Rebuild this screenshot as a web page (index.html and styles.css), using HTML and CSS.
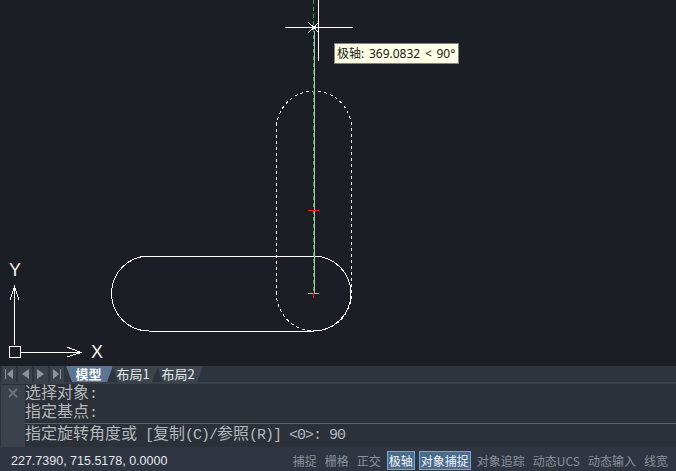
FILE: index.html
```html
<!DOCTYPE html>
<html lang="zh-CN">
<head>
<meta charset="utf-8">
<title>CAD</title>
<link rel="stylesheet" href="styles.css">
</head>
<body>
<div class="app">
  <div class="canvas">
    <svg class="drawing" width="676" height="366" viewBox="0 0 676 366">
      <path class="white" d="M313.5 256H149A37.5 37.5 0 0 0 149 331H313.5A37.5 37.5 0 0 0 313.5 256"/>
      <path class="dash" d="M276.5 293.5V128.5A37.5 37.5 0 0 1 351.5 128.5V293.5A37.5 37.5 0 0 1 276.5 293.5"/>
      <path class="grey" d="M314.5 31V293.5M308 293.5H319"/>
      <path class="green" d="M313.5 0V293"/>
      <path class="red" d="M308 210.5H319M313.5 293V298"/>
      <path class="white" d="M285 27.5H353M318.5 0V61M308 22L314 27.5L308 33M314 27.5L318 23V32Z"/>
      <path class="white" d="M14.5 345V288M10 300L14.5 287L19 300M21 352.5H80M67 347L81 352.5L67 357"/>
      <rect class="white" x="9.5" y="346.5" width="11" height="11"/>
      <text class="axis" x="9" y="276">Y</text>
      <text class="axis" x="91" y="358">X</text>
    </svg>
    <div class="tip">极轴: 369.0832 &lt; 90°</div>
  </div>
  <div class="tabbar">
    <div class="nav">
      <span class="navbtn"><svg width="12" height="12" viewBox="0 0 12 12"><path d="M2 1h1v10H2zM10 1v10L4 6z"/></svg></span>
      <span class="navbtn"><svg width="12" height="12" viewBox="0 0 12 12"><path d="M10 1v10L3 6z"/></svg></span>
      <span class="navbtn"><svg width="12" height="12" viewBox="0 0 12 12"><path d="M2 1v10l7-5z"/></svg></span>
      <span class="navbtn"><svg width="12" height="12" viewBox="0 0 12 12"><path d="M9 1h1v10H9zM2 1v10l6-5z"/></svg></span>
    </div>
    <span class="tab active">模型</span>
    <span class="tab">布局1</span>
    <span class="tab">布局2</span>
  </div>
  <div class="cmd">
    <div class="side"><svg width="10" height="10" viewBox="0 0 10 10"><path d="M1 1L9 9M9 1L1 9"/></svg></div>
    <div class="cmdbody">
      <div class="history">
        <div><span class="zh">选择对象</span>:</div>
        <div><span class="zh">指定基点</span>:</div>
      </div>
      <div class="prompt"><span class="zh">指定旋转角度或</span> [<span class="zh">复制</span>(C)/<span class="zh">参照</span>(R)] &lt;0&gt;: 90</div>
    </div>
  </div>
  <div class="status">
    <span class="coords">227.7390, 715.5178, 0.0000</span>
    <div class="toggles">
      <span class="tg">捕捉</span>
      <span class="tg">栅格</span>
      <span class="tg">正交</span>
      <span class="tg on">极轴</span>
      <span class="tg on">对象捕捉</span>
      <span class="tg">对象追踪</span>
      <span class="tg">动态UCS</span>
      <span class="tg">动态输入</span>
      <span class="tg">线宽</span>
    </div>
  </div>
</div>
</body>
</html>
```
FILE: styles.css
```css
* { box-sizing: border-box; }
html, body { margin: 0; padding: 0; background: #1b1f25; }
.app { width: 676px; height: 471px; display: flex; flex-direction: column; overflow: hidden; font-family: "Noto Sans CJK SC", "Liberation Sans", sans-serif; }
.canvas { position: relative; height: 366px; background: #1b1f25; }
.drawing { display: block; }
.drawing path, .drawing rect { fill: none; shape-rendering: crispEdges; }
.white { stroke: #fff; stroke-width: 1; }
.dash { stroke: #fff; stroke-width: 1; stroke-dasharray: 3 3; }
.grey { stroke: #b9bdb9; stroke-width: 1; }
.green { stroke: #2fae3f; stroke-width: 1; stroke-dasharray: 4 3; }
.red { stroke: #ff1a1a; stroke-width: 1; }
.axis { fill: #f4f4f4; font-family: "Liberation Sans", sans-serif; font-size: 18px; font-weight: 400; }
.tip { position: absolute; left: 334px; top: 43px; width: 125px; height: 21px; background: #ffffe6; border: 1px solid #7f8285; color: #1a1a1a; font-family: "Noto Sans", "Noto Sans CJK SC", sans-serif; font-size: 12px; word-spacing: 1.6px; line-height: 20px; padding-left: 2px; white-space: nowrap; }
.tabbar { height: 16px; background: #2e343d; display: flex; align-items: stretch; color: #e6e8ea; font-size: 13px; }
.nav { display: flex; gap: 2px; padding-left: 2px; width: 66px; }
.navbtn { width: 14px; background: #3b424c; display: flex; align-items: center; justify-content: center; }
.navbtn svg { fill: #8c939c; }
.tab { display: flex; align-items: center; justify-content: center; width: 46px; line-height: 16px; background: #3d4550; clip-path: polygon(0 0, 100% 0, calc(100% - 6px) 100%, 6px 100%); margin-right: -1px; padding-right: 4px; }
.tab.active { width: 47px; padding-right: 2px; background: #5b7592; color: #fff; font-weight: 700; }
.cmd { height: 65px; background: #2c3038; border-top: 2px solid #3a4049; display: flex; padding: 1px 0 0 1px; }
.side { width: 24px; background: #3b424c; }
.side svg { stroke: #6b727c; stroke-width: 2; display: block; margin: 3px auto 0; }
.cmdbody { flex: 1; display: flex; flex-direction: column; font-family: "Liberation Mono", "Noto Sans CJK SC", monospace; color: #b4b8bd; font-size: 15px; letter-spacing: -1px; }
.zh { font-size: 16px; line-height: 16px; letter-spacing: 0; }
.history { height: 39px; }
.history div { height: 19px; line-height: 19px; white-space: nowrap; }
.prompt { flex: 1; border-top: 1px solid #5c636d; line-height: 23px; white-space: pre; }
.status { flex: 1; background: #2f3641; display: flex; align-items: flex-end; justify-content: space-between; padding: 0 4px 1px 11px; }
.coords { color: #e4e8ee; font-size: 12.5px; line-height: 20px; margin-bottom: -1px; font-family: "Liberation Sans", sans-serif; white-space: nowrap; }
.toggles { display: flex; align-items: center; }
.tg { color: #8a919b; font-size: 12px; margin: 0 4px; line-height: 19px; height: 19px; white-space: nowrap; }
.tg.on { color: #f2f5f8; background: #4d6a88; border: 1px solid #5fb0e8; padding: 0 1px; margin: 0 2px; line-height: 17px; }
```
